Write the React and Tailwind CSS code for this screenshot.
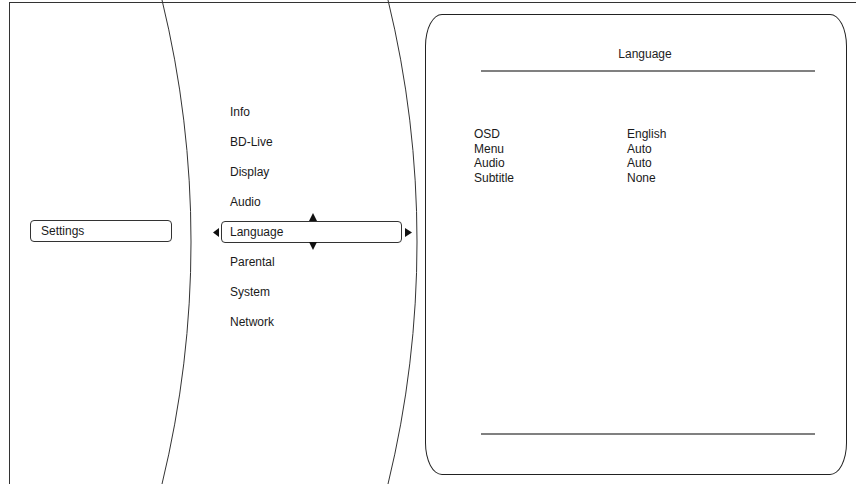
import React from 'react';

const menuItems = ['Info', 'BD-Live', 'Display', 'Audio', 'Language', 'Parental', 'System', 'Network'];

const languageRows = [
    { label: 'OSD', value: 'English' },
    { label: 'Menu', value: 'Auto' },
    { label: 'Audio', value: 'Auto' },
    { label: 'Subtitle', value: 'None' },
];

const Arrow = ({ dir, className }) => {
    // small solid triangles around the selected item
    const points = {
        left: '6,0 6,9 0,4.5',
        right: '0,0 0,9 7,4.5',
        up: '0,8 8,8 4,0',
        down: '0,0 8,0 4,8',
    };
    const size = dir === 'left' || dir === 'right' ? { w: dir === 'left' ? 6 : 7, h: 9 } : { w: 8, h: 8 };
    return (
        <svg width={size.w} height={size.h} viewBox={`0 0 ${size.w} ${size.h}`} className={className}>
            <polygon points={points[dir]} fill="#111" />
        </svg>
    );
};

const MenuItem = ({ label, selected }) => {
    if (selected) {
        return (
            <div className="h-[30px] flex items-center">
                <div className="relative w-[181px] h-[22px] border border-[#333] rounded-[4px] flex items-center pl-[8px] bg-white">
                    <Arrow dir="left" className="absolute left-[-9px] top-[6px]" />
                    <Arrow dir="right" className="absolute right-[-11px] top-[6px]" />
                    <Arrow dir="up" className="absolute left-[87px] top-[-9px]" />
                    <Arrow dir="down" className="absolute left-[87px] bottom-[-8px]" />
                    <span>{label}</span>
                </div>
            </div>
        );
    }
    return (
        <div className="h-[30px] flex items-center pl-[9px]">
            <span>{label}</span>
        </div>
    );
};

export default function App() {
    return (
        <div
            className="relative w-[856px] h-[484px] bg-white overflow-hidden text-[12px] leading-[14px] text-[#1a1a1a]"
            style={{ fontFamily: '"Liberation Sans", Arial, sans-serif' }}
        >
            <div className="pt-[2px] pl-[9px]">
                <div className="h-[482px] border-l border-t border-[#333] flex">
                    {/* parent menu */}
                    <div className="w-[200px] shrink-0 pl-[20px] pt-[217px]">
                        <div className="w-[142px] h-[22px] border border-[#333] rounded-[4px] flex items-center pl-[10px]">
                            Settings
                        </div>
                    </div>

                    {/* settings submenu */}
                    <div className="w-[215px] shrink-0 pl-[11px] pt-[94px]">
                        {menuItems.map((item) => (
                            <MenuItem key={item} label={item} selected={item === 'Language'} />
                        ))}
                    </div>

                    {/* detail panel */}
                    <div className="pt-[11px]">
                        <div className="w-[422px] h-[461px] border border-[#222] rounded-[17px/32px] flex flex-col pb-[39px]">
                            <div className="pt-[32px] pl-[55px] w-[389px]">
                                <div className="text-center pr-[6px] text-[#222]">Language</div>
                                <div className="mt-[9px] h-[2px] bg-[#808080]" />
                            </div>
                            <div className="mt-[55px] pl-[48px] leading-[14.7px]">
                                {languageRows.map((row) => (
                                    <div key={row.label} className="flex">
                                        <span className="w-[153px]">{row.label}</span>
                                        <span>{row.value}</span>
                                    </div>
                                ))}
                            </div>
                            <div className="mt-auto ml-[55px] w-[334px] h-[2px] bg-[#808080]" />
                        </div>
                    </div>
                </div>
            </div>

            {/* curved dividers */}
            <svg className="absolute inset-0 pointer-events-none" width="856" height="484" viewBox="0 0 856 484">
                <path d="M162 0 A1024 1024 0 0 1 162 484" fill="none" stroke="#333" strokeWidth="1" />
                <path d="M388 0 A1024 1024 0 0 1 388 484" fill="none" stroke="#333" strokeWidth="1" />
            </svg>
        </div>
    );
}
